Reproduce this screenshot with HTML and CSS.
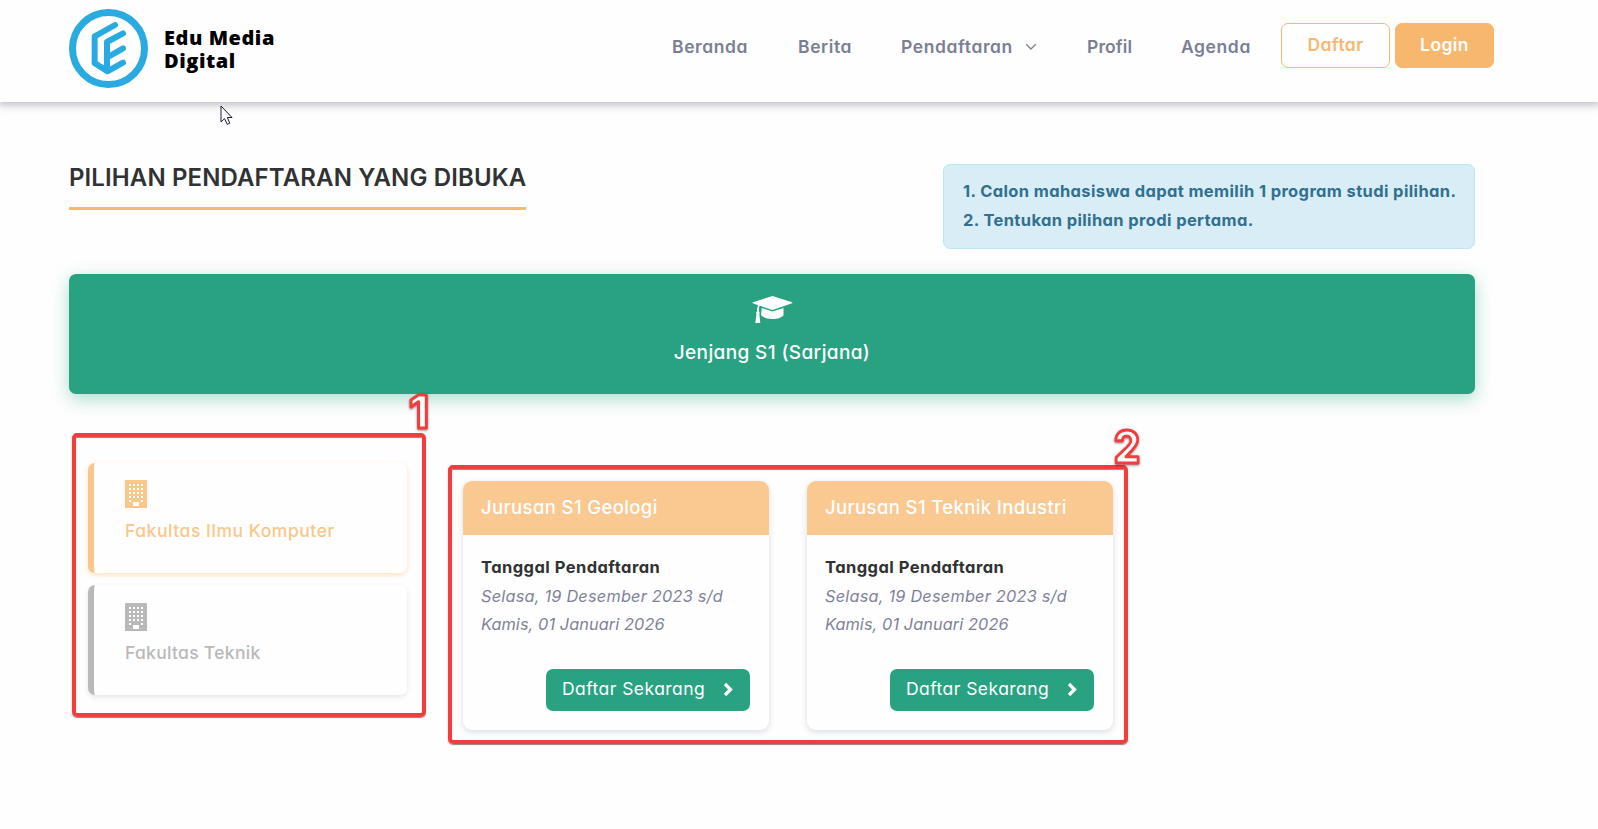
FILE: index.html
```html
<!DOCTYPE html>
<html lang="id">
<head>
<meta charset="utf-8">
<title>Edu Media Digital - Pendaftaran</title>
<link rel="stylesheet" href="styles.css">
</head>
<body>
<svg class="symbols" aria-hidden="true">
  <symbol id="building" viewBox="0 0 22 28">
    <path fill="currentColor" fill-rule="evenodd" d="M1 0h20a1 1 0 0 1 1 1v27H0V1a1 1 0 0 1 1-1z
    M4 4v2h2v-2z M8 4v2h2v-2z M12 4v2h2v-2z M16 4v2h2v-2z
    M4 8v2h2v-2z M8 8v2h2v-2z M12 8v2h2v-2z M16 8v2h2v-2z
    M4 12v2h2v-2z M8 12v2h2v-2z M12 12v2h2v-2z M16 12v2h2v-2z
    M4 16v2h2v-2z M8 16v2h2v-2z M12 16v2h2v-2z M16 16v2h2v-2z
    M4 20v2h2v-2z M16 20v2h2v-2z M8 22v4h6v-4z"/>
  </symbol>
  <symbol id="chevron" viewBox="0 0 10 15">
    <path d="M2 2l5.500 5.500L2 13" fill="none" stroke="currentColor" stroke-width="3.200"/>
  </symbol>
</svg>

<header class="header">
  <a class="brand">
    <svg class="brand-mark" viewBox="0 0 237 237">
      <circle cx="118.500" cy="118.500" r="108" fill="#fff" stroke="#29abe2" stroke-width="21"/>
      <g fill="none" stroke="#29abe2" stroke-width="18" stroke-linecap="round" stroke-linejoin="round">
        <path d="M138 48L77 82V162L115 187L162 161"/>
        <path d="M162 73L114 99V180"/>
        <path d="M117 144L162 118"/>
      </g>
      <path d="M68 158L86 168L95 165L104 168L123 164V180L115 196L70 168z" fill="#29abe2"/>
    </svg>
    <span class="brand-name"><span>Edu Media</span><span>Digital</span></span>
  </a>
  <nav class="nav">
    <a>Beranda</a>
    <a>Berita</a>
    <a class="has-menu">Pendaftaran
      <svg width="12" height="8" viewBox="0 0 12 8"><path d="M1.300 1.300L6 6l4.700-4.700" fill="none" stroke="currentColor" stroke-width="1.300"/></svg>
    </a>
    <a class="tight">Profil</a>
    <a>Agenda</a>
  </nav>
  <div class="auth">
    <a class="btn btn-outline">Daftar</a>
    <a class="btn btn-solid">Login</a>
  </div>
</header>

<main class="main">
  <section class="intro">
    <h1 class="title">PILIHAN PENDAFTARAN YANG DIBUKA</h1>
    <div class="alert">
      <div>1. Calon mahasiswa dapat memilih 1 program studi pilihan.</div>
      <div>2. Tentukan pilihan prodi pertama.</div>
    </div>
  </section>

  <section class="level">
    <svg width="41" height="28" viewBox="0 0 41 28" fill="#fff">
      <path d="M20.500 0L40 6.200Q41 6.700 40 7.200L20.500 14L7.800 9.700Q7 10.500 6.900 12.500V15.500Q8.300 16.500 7.300 18L8.300 27H3.300L4.500 18Q3.400 16.700 4.900 15.400Q5 11 6.200 9.200L.9 7.300Q0 6.700.9 6.200z"/>
      <path d="M9.800 12L20.500 15.600L31.500 12V19C30 21.500 26 23 20.500 23S11 21.500 9 19z"/>
    </svg>
    <div class="level-name">Jenjang S1 (Sarjana)</div>
  </section>

  <section class="content">
    <div class="faculties">
      <a class="faculty active">
        <svg class="faculty-icon"><use href="#building"/></svg>
        <span>Fakultas Ilmu Komputer</span>
      </a>
      <a class="faculty second">
        <svg class="faculty-icon"><use href="#building"/></svg>
        <span>Fakultas Teknik</span>
      </a>
    </div>
    <div class="majors">
      <article class="major">
        <h2 class="major-head">Jurusan S1 Geologi</h2>
        <div class="major-body">
          <strong>Tanggal Pendaftaran</strong>
          <em>Selasa, 19 Desember 2023 s/d</em>
          <em class="until">Kamis, 01 Januari 2026</em>
          <a class="apply"><span>Daftar Sekarang</span><svg width="10" height="15"><use href="#chevron"/></svg></a>
        </div>
      </article>
      <article class="major">
        <h2 class="major-head">Jurusan S1 Teknik Industri</h2>
        <div class="major-body">
          <strong>Tanggal Pendaftaran</strong>
          <em>Selasa, 19 Desember 2023 s/d</em>
          <em class="until">Kamis, 01 Januari 2026</em>
          <a class="apply"><span>Daftar Sekarang</span><svg width="10" height="15"><use href="#chevron"/></svg></a>
        </div>
      </article>
    </div>
  </section>
</main>

<div class="mark mark-one"></div>
<div class="mark mark-two"></div>
<svg class="digit digit-one" width="50" height="64"><text x="9" y="48">1</text></svg>
<svg class="digit digit-two" width="50" height="64"><text x="5" y="48" textLength="26" lengthAdjust="spacingAndGlyphs">2</text></svg>
<svg class="pointer" width="14" height="21" viewBox="0 0 14 21"><path d="M1 1V17L4.500 13.700L7.300 19.300L9.800 18.200L7.300 12.500H12z" fill="#fff" stroke="#1b1b2b" stroke-width="1"/></svg>
</body>
</html>
```
FILE: styles.css
```css
* { box-sizing: border-box; }

body {
  margin: 0;
  height: 829px;
  overflow: hidden;
  position: relative;
  background: #fefefe;
  color: #7e8299;
  font-family: Inter, "Open Sans", sans-serif;
  font-feature-settings: "cv11";
  white-space: nowrap;
}

.symbols { position: absolute; width: 0; height: 0; }

/* Header */
.header {
  display: flex;
  align-items: flex-start;
  height: 102px;
  padding-left: 69px;
  background: #fefefe;
  box-shadow: 0 1px 8px 2px rgba(70, 75, 90, .36);
}

.brand { display: flex; width: 603px; padding-top: 9px; gap: 16px; }
.brand-mark { width: 79px; height: 79px; }
.brand-name {
  display: flex;
  flex-direction: column;
  padding-top: 17px;
  color: #000;
  font: 800 20px/23px "Open Sans", sans-serif;
  letter-spacing: .55px;
}

.nav {
  display: grid;
  grid-template-columns: 126px 103px 186px 94px 100px;
  padding-top: 35px;
  color: #7b7f93;
  font-size: 17.5px;
  font-weight: 600;
  line-height: 24px;
  letter-spacing: .6px;
}
.nav .tight { letter-spacing: .1px; }
.has-menu { display: flex; align-items: center; gap: 12px; }

.auth { display: flex; gap: 5px; padding-top: 23px; }
.btn {
  display: flex;
  justify-content: center;
  height: 45px;
  border: 1px solid #f8b76e;
  border-radius: 7px;
  font-size: 17.5px;
  font-weight: 600;
  line-height: 42px;
  letter-spacing: .4px;
}
.btn-outline { width: 109px; color: #f8b76e; }
.btn-solid { width: 99px; background: #f8b76e; color: #fff; }

/* Page */
.main { width: 1406px; margin-left: 69px; padding-top: 58px; }

.intro {
  display: flex;
  justify-content: space-between;
  align-items: flex-start;
  height: 114px;
}
.title {
  width: 457px;
  margin: 0;
  padding-bottom: 11px;
  border-bottom: 3px solid #f8b76e;
  color: #303233;
  font-size: 24px;
  font-weight: 600;
  line-height: 36px;
  letter-spacing: .12px;
}
.alert {
  width: 532px;
  height: 85px;
  margin-top: 4px;
  padding: 12px 19px;
  border: 1px solid #bce8f1;
  border-radius: 7px;
  background: #d9edf6;
  color: #31708f;
  font-size: 16.5px;
  font-weight: 700;
  line-height: 29px;
  letter-spacing: .37px;
}

.level {
  display: flex;
  flex-direction: column;
  align-items: center;
  height: 120px;
  padding-top: 22px;
  border-radius: 7px;
  background: #29a282;
  color: #fff;
  box-shadow: 0 5px 18px rgba(41, 162, 130, .38);
}
.level-name {
  margin-top: 15px;
  font-size: 19px;
  font-weight: 500;
  line-height: 28px;
  letter-spacing: .38px;
}

.content { display: flex; gap: 56px; padding: 69px 0 0 19px; }

.faculties { display: flex; flex-direction: column; gap: 12px; }
.faculty {
  display: flex;
  flex-direction: column;
  width: 319px;
  height: 110px;
  padding: 17px 0 0 31px;
  border-left: 6px solid #b9b9b9;
  border-radius: 7px;
  background: #fefefe;
  color: #b9b9b9;
  font-size: 17.5px;
  font-weight: 500;
  line-height: 26px;
  letter-spacing: .3px;
  box-shadow: 0 2px 5px rgba(70, 80, 100, .14);
}
.faculty.active {
  border-color: #f9c78a;
  color: #f9c78a;
  letter-spacing: .55px;
  box-shadow: 0 2px 5px rgba(248, 183, 110, .42);
}
.faculty-icon { width: 22px; height: 28px; margin-bottom: 10px; }
.faculty.second { padding-top: 18px; }
.second .faculty-icon { margin-bottom: 9px; }

.majors { display: flex; gap: 38px; padding-top: 18px; }
.major {
  width: 306px;
  height: 249px;
  border-radius: 9px;
  overflow: hidden;
  background: #fefefe;
  box-shadow: 0 2px 6px rgba(70, 80, 100, .2);
}
.major-head {
  height: 54px;
  margin: 0;
  padding-left: 18px;
  background: #fac992;
  color: #fff;
  font-size: 18.5px;
  font-weight: 500;
  line-height: 53px;
  letter-spacing: .38px;
}
.major-body {
  display: flex;
  flex-direction: column;
  padding: 18px 19px 0 18px;
  font-size: 16.3px;
  line-height: 28.5px;
  letter-spacing: .23px;
}
.major-body strong {
  color: #303233;
  font-size: 16.5px;
  font-weight: 700;
  letter-spacing: .45px;
}
.until { letter-spacing: .1px; }
.apply {
  display: flex;
  align-items: center;
  align-self: flex-end;
  justify-content: space-between;
  width: 204px;
  height: 42px;
  margin-top: 30px;
  padding: 0 17px 0 16px;
  border-radius: 7px;
  background: #29a282;
  color: #fff;
  font-size: 17.5px;
  letter-spacing: .45px;
}
.apply svg { margin-bottom: 1px; }

/* Numbered highlights laid over the page */
.mark {
  position: absolute;
  border: 4px solid #f23c3d;
  border-radius: 5px;
  box-shadow: 0 1px 1px rgba(60, 0, 0, .5), inset 0 1px 1px rgba(60, 0, 0, .5);
}
.mark-one { left: 72px; top: 433px; width: 354px; height: 284px; }
.mark-two { left: 448px; top: 465px; width: 680px; height: 279px; }

.digit {
  position: absolute;
  filter: drop-shadow(0 1px 1px rgba(60, 0, 0, .5));
  font: 800 45px Inter, sans-serif;
  fill: #fff;
  stroke: #f23c3d;
  stroke-width: 3px;
  stroke-linejoin: round;
}
.digit-one { left: 400px; top: 380px; }
.digit-two { left: 1109px; top: 415px; }

.pointer { position: absolute; left: 220px; top: 105px; }
```
